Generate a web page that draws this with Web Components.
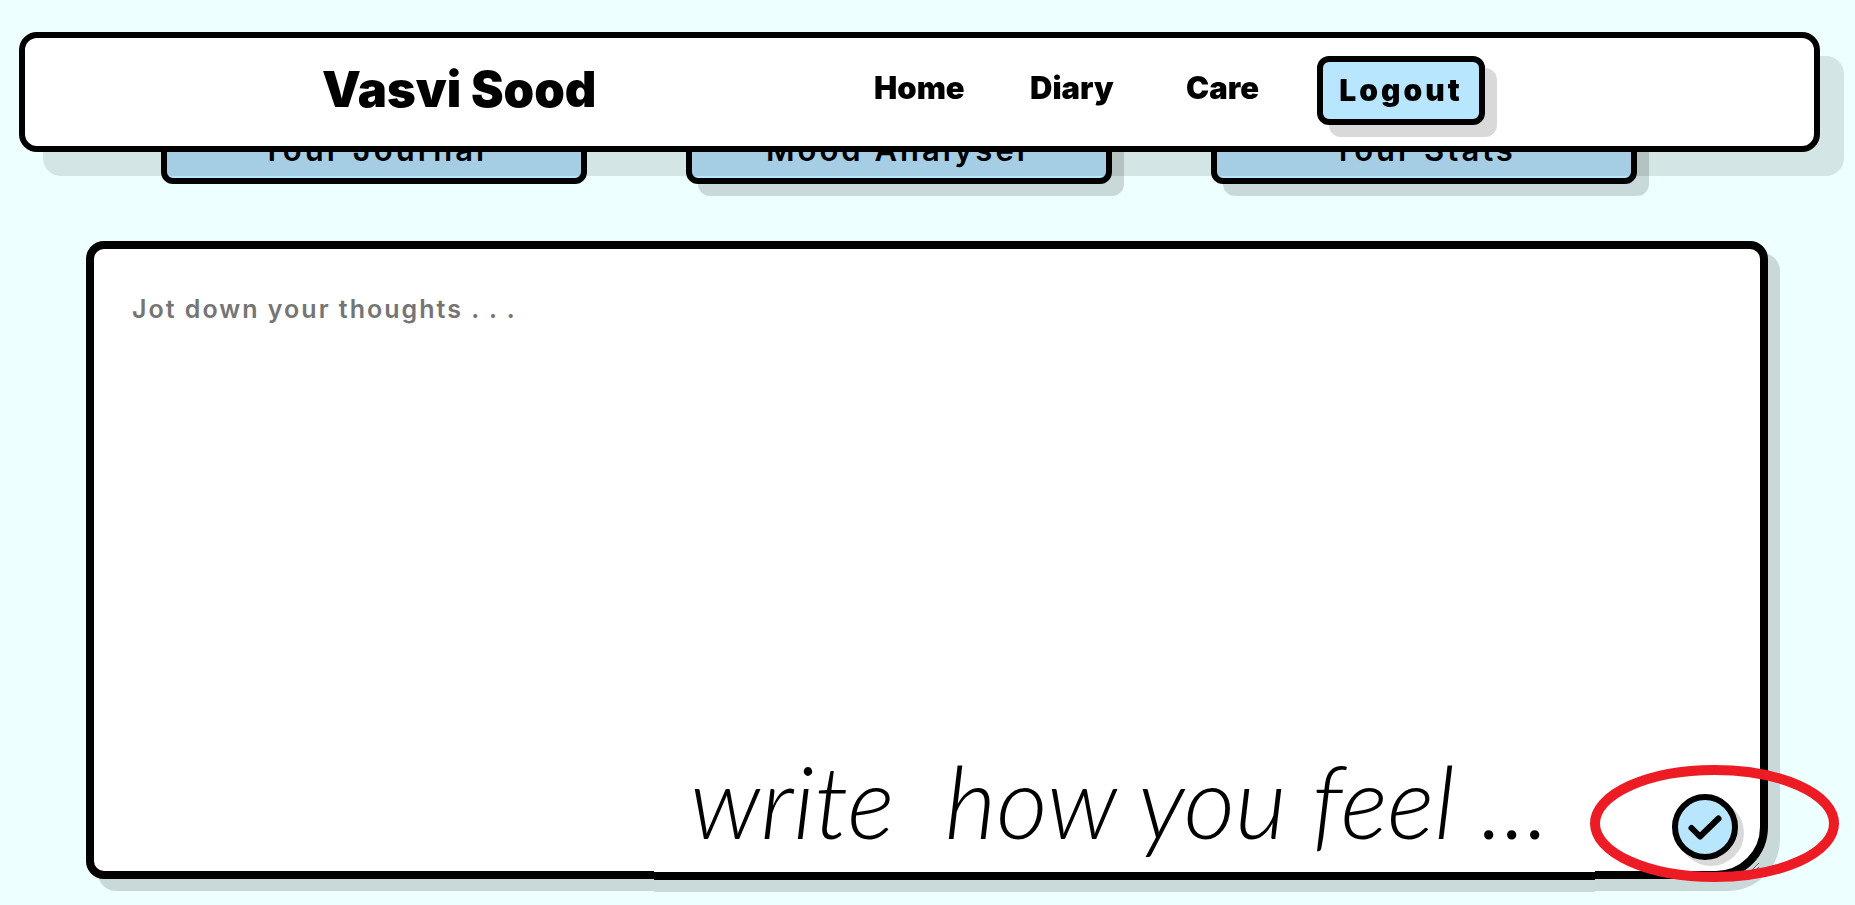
<!DOCTYPE html>
<html lang="en">
<head>
<meta charset="utf-8">
<meta name="viewport" content="width=device-width, initial-scale=1">
<title>Diary</title>
<style>
  html { background: #edffff; }
  body { margin: 0; font-family: Inter, "Open Sans", sans-serif; color: #000; }
</style>
</head>
<body>
<diary-page>
  <site-nav slot="nav" brand="Vasvi Sood"></site-nav>
  <diary-tab slot="tab" active>Your Journal</diary-tab>
  <diary-tab slot="tab">Mood Analyser</diary-tab>
  <diary-tab slot="tab">Your Stats</diary-tab>
  <journal-editor slot="editor" hint="Jot down your thoughts . . .">
    <margin-note slot="note">write  how you feel ...</margin-note>
  </journal-editor>
</diary-page>

<script>
  const define = (name, html, setup) => {
    const template = document.createElement('template');
    template.innerHTML = html;
    customElements.define(name, class extends HTMLElement {
      constructor() {
        super();
        this.attachShadow({ mode: 'open' }).append(template.content.cloneNode(true));
      }
      connectedCallback() {
        if (setup) setup(this, this.shadowRoot);
      }
    });
  };

  define('diary-page', `
    <style>
      :host {
        display: flex; flex-direction: column; gap: 57px;
        box-sizing: border-box; min-height: 100vh; padding: 116px 0 26px;
      }
      .tabs {
        display: grid; grid-template-columns: repeat(3, 1fr); gap: 99px;
        padding: 0 218px 0 161px;
      }
      main { flex: 1; display: flex; padding: 0 87px 0 86px; }
      ::slotted(journal-editor) { flex: 1; }
    </style>
    <slot name="nav"></slot>
    <div class="tabs"><slot name="tab"></slot></div>
    <main><slot name="editor"></slot></main>
  `);

  define('site-nav', `
    <style>
      :host { position: fixed; z-index: 2; top: 32px; left: 19px; right: 35px; }
      nav {
        box-sizing: border-box; height: 120px; padding: 0 329px 4px 297px;
        display: flex; align-items: center; justify-content: space-between;
        background: #fff; border: 6px solid #000; border-radius: 18px;
        box-shadow: 24px 24px 0 rgba(0, 0, 0, .1);
      }
      .links {
        display: grid; grid-template-columns: 156px 156px 131px auto; align-items: center;
        margin: 0; padding: 0; list-style: none;
      }
      a { display: block; color: #000; text-decoration: none; font-size: 31px; line-height: 40px; font-weight: 900; padding-bottom: 4px; }
      a.brand { font-size: 49px; line-height: 64px; white-space: nowrap; padding: 0; }
    </style>
    <nav>
      <a class="brand" href="#"></a>
      <ul class="links">
        <li><a href="#home">Home</a></li>
        <li><a href="#diary">Diary</a></li>
        <li><a href="#care">Care</a></li>
        <li><logout-button></logout-button></li>
      </ul>
    </nav>
  `, (host, root) => {
    root.querySelector('.brand').textContent = host.getAttribute('brand');
  });

  define('logout-button', `
    <style>
      :host { display: block; }
      button {
        display: block; box-sizing: border-box; width: 168px; height: 69px; padding: 0;
        font: 900 30px/40px Inter, sans-serif; letter-spacing: 3px; color: #000;
        background: #b8e6ff; border: 6px solid #000; border-radius: 12px;
        box-shadow: 12px 12px 0 rgba(0, 0, 0, .15);
      }
    </style>
    <button type="button">Logout</button>
  `);

  define('diary-tab', `
    <style>
      :host { display: block; }
      button {
        display: block; box-sizing: border-box; width: 100%; height: 68px; padding: 0;
        font: 600 31px/40px Inter, sans-serif; letter-spacing: 3px; color: #000;
        background: #b8e6ff; border: 6px solid #000; border-radius: 12px;
        box-shadow: 12px 12px 0 rgba(0, 0, 0, .15);
      }
      :host([active]) button { box-shadow: none; }
    </style>
    <button type="button"><slot></slot></button>
  `);

  define('journal-editor', `
    <style>
      :host { display: flex; position: relative; }
      textarea {
        display: block; flex: 1; box-sizing: border-box; margin: 0; padding: 40px 38px;
        font: 600 25px/40px Inter, sans-serif; letter-spacing: 2px; color: #000;
        background: #fff; border: 8px solid #000; border-radius: 18px 18px 52px 18px;
        box-shadow: 12px 12px 0 rgba(0, 0, 0, .15); outline: 0;
      }
      textarea::placeholder { color: #757575; opacity: 1; }
      ::slotted(margin-note) { position: absolute; right: 173px; bottom: -1px; }
      save-button { position: absolute; right: 30px; bottom: 19px; }
      .ring { position: absolute; right: -71px; bottom: -3px; display: block; pointer-events: none; }
    </style>
    <textarea aria-label="Journal entry"></textarea>
    <slot name="note"></slot>
    <save-button></save-button>
    <svg class="ring" width="249" height="117" viewBox="0 0 249 117" aria-hidden="true">
      <ellipse cx="124.500" cy="58.500" rx="119.500" ry="53.500" fill="none" stroke="#ed1c24" stroke-width="10"/>
    </svg>
  `, (host, root) => {
    root.querySelector('textarea').placeholder = host.getAttribute('hint');
  });

  define('margin-note', `
    <style>
      :host {
        display: block; box-sizing: border-box; width: 941px; padding: 0 0 16px 36px;
        background: #fff; border-bottom: 8px solid #000; box-shadow: 0 12px 0 #cad9d9;
        font: italic 300 100px/112px Lato, sans-serif;
      }
      slot { display: block; white-space: pre; }
    </style>
    <slot></slot>
  `);

  define('save-button', `
    <style>
      :host { display: block; }
      button {
        display: grid; place-items: center; box-sizing: border-box;
        width: 66px; height: 66px; padding: 0;
        background: #b8e6ff; border: 6px solid #000; border-radius: 50%;
        box-shadow: 6px 6px 0 rgba(0, 0, 0, .15);
      }
    </style>
    <button type="button" aria-label="Save entry">
      <svg width="54" height="54" viewBox="0 0 54 54" fill="none" stroke="#000" stroke-width="6" stroke-linecap="round" stroke-linejoin="round" aria-hidden="true">
        <path d="M13.500 28 22 36.500 40.500 18.500"/>
      </svg>
    </button>
  `);
</script>
</body>
</html>
